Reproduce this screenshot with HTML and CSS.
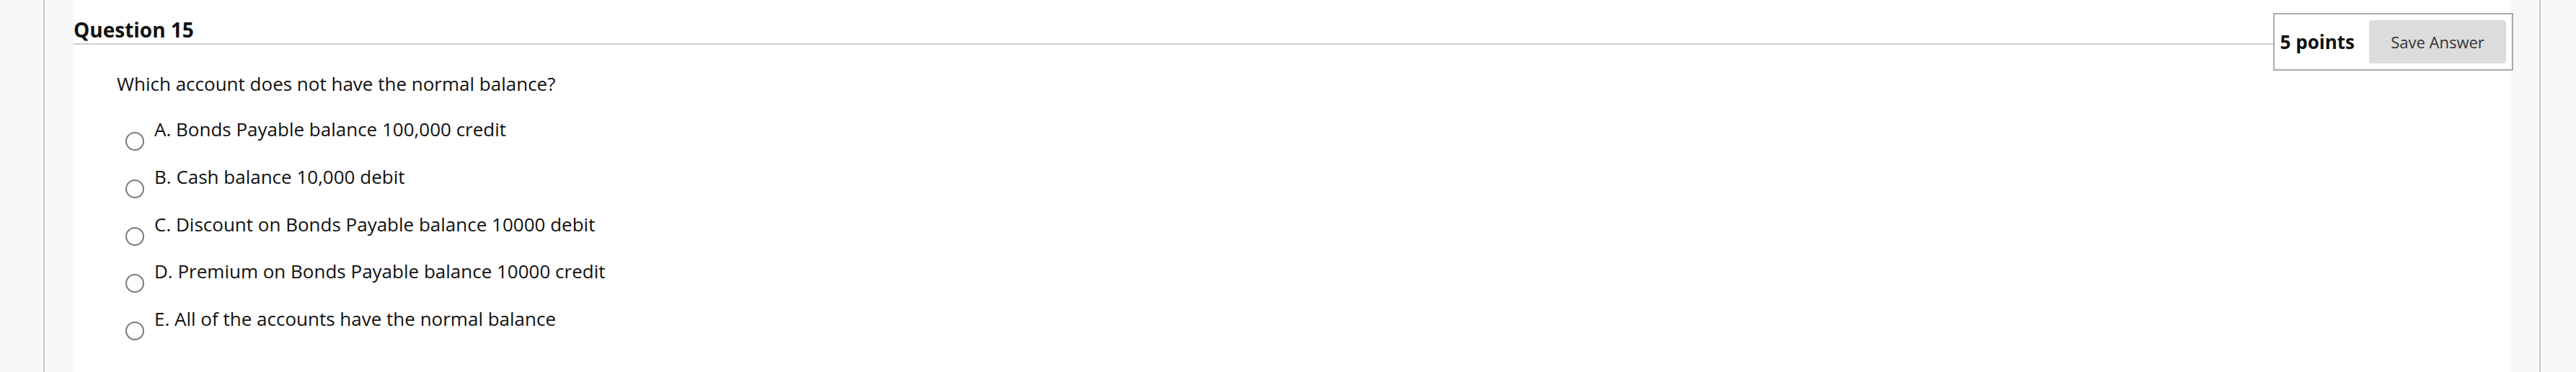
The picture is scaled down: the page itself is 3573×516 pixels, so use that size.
FILE: index.html
```html
<!DOCTYPE html>
<html>
    <head>
        <title>Question 15</title>
        <link rel="stylesheet" href="styles.css">
    </head>
    <body>
        <div id="frame">
            <div id="panel">
                <div class="header">
                    <h3 class="title">Question 15</h3>
                    <div class="points">
                        <span class="points-label">5 points</span>
                        <button type="button" class="save">Save Answer</button>
                    </div>
                </div>
                <div class="question">
                    <p class="prompt">Which account does not have the normal balance?</p>
                    <div class="options">
                        <label class="option">
                            <input type="radio" name="ans" value="a">
                            <span>A. Bonds Payable balance 100,000 credit</span>
                        </label>
                        <label class="option">
                            <input type="radio" name="ans" value="b">
                            <span>B. Cash balance 10,000 debit</span>
                        </label>
                        <label class="option">
                            <input type="radio" name="ans" value="c">
                            <span>C. Discount on Bonds Payable balance 10000 debit</span>
                        </label>
                        <label class="option">
                            <input type="radio" name="ans" value="d">
                            <span>D. Premium on Bonds Payable balance 10000 credit</span>
                        </label>
                        <label class="option">
                            <input type="radio" name="ans" value="e">
                            <span>E. All of the accounts have the normal balance</span>
                        </label>
                    </div>
                </div>
            </div>
        </div>
    </body>
</html>
```

FILE: styles.css
```css
html {
    height:100%;
}

body {
    margin:0;
    padding:0;
    min-height:100%;
    background:#F7F7F7;
    font-family: "Open Sans", sans-serif;
    color:#111;
}

#frame {
    margin:0 49px 0 60px;
    padding:0 40px;
    border-left:2px solid #C8C8C8;
    border-right:2px solid #C8C8C8;
    min-height:516px;
}

#panel {
    background:#FFF;
    min-height:516px;
}

.header {
    display:flex;
    align-items:flex-start;
}

.title {
    flex:1;
    margin:24px 0 0 0;
    padding:0 0 2px 0;
    font-size:28px;
    line-height:34px;
    font-weight:bold;
    border-bottom:2px solid #CFCFCF;
}

.points {
    display:flex;
    align-items:center;
    margin:18px -4px 0 0;
    padding:8px;
    border:2px solid #ABABAB;
}

.points-label {
    font-size:26px;
    font-weight:bold;
    margin-right:20px;
}

.save {
    width:190px;
    height:60px;
    background:#DCDCDC;
    border:0;
    border-radius:4px;
    font-family: "Open Sans", sans-serif;
    font-size:22px;
    color:#333;
    cursor:pointer;
}

.question {
    padding:0 0 0 60px;
}

.prompt {
    margin:0;
    font-size:26px;
    line-height:36px;
}

.options {
    display:flex;
    flex-direction:column;
    gap:17.75px;
    padding:27px 0 0 12px;
}

.option {
    display:flex;
    align-items:flex-start;
    font-size:26px;
    line-height:36px;
}

.option input {
    appearance:none;
    -webkit-appearance:none;
    box-sizing:border-box;
    width:26px;
    height:26px;
    margin:22px 14px 0 0;
    border:2px solid #7A7A7A;
    border-radius:50%;
    background:#FFF;
}
```
